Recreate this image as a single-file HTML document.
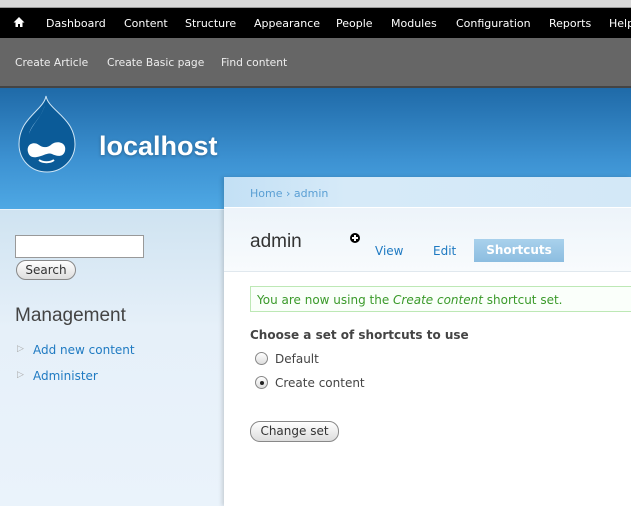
<!DOCTYPE html>
<html><head><meta charset="utf-8"><style>
*{margin:0;padding:0;box-sizing:border-box}
body{width:631px;height:506px;overflow:hidden;position:relative;font-family:"DejaVu Sans","Liberation Sans",sans-serif;background:#fff}
.a{position:absolute;white-space:nowrap}
#tabs{left:0;top:0;width:631px;height:8px;background:#d8d8d8;border-bottom:1px solid #999}
#tb{left:0;top:8px;width:631px;height:30px;background:#000;color:#fff;font-size:11px}
#tb span{position:absolute;top:9px}
#sc{left:0;top:38px;width:631px;height:50px;background:#666;color:#eee;font-size:10.7px;border-bottom:2px solid #444}
#sc span{position:absolute;top:18px}
#hd{left:0;top:88px;width:631px;height:121px;background:linear-gradient(#1f6aa8,#3d92d2 60%,#4ea8e4)}
#sb{left:0;top:209px;width:224px;height:297px;background:linear-gradient(#cfe3f1,#e6f0f9 40%,#eaf3fb);border-top:1px solid #e8f2fa}
#main{left:224px;top:177px;width:407px;height:329px;background:#fff;box-shadow:-2px 0 4px rgba(0,0,0,.15)}
#bc{left:224px;top:177px;width:407px;height:31px;background:linear-gradient(90deg,#c3e0f5,#d6eaf8 30%,#d3e8f7);border-bottom:1px solid #fff}
#ttl{left:224px;top:208px;width:407px;height:64px;background:linear-gradient(#edf4fa,#f8fbfd);border-bottom:1px solid #e0e8ee}
</style></head><body>
<div class="a" id="tabs"></div>
<div class="a" id="tb">
<svg style="position:absolute;left:13px;top:8px" width="12" height="12" viewBox="0 0 12 12"><path d="M6 1L0.5 6.5H2.5V11H5V8H7V11H9.5V6.5H11.5Z" fill="#fff"/></svg>
<span style="left:46px">Dashboard</span><span style="left:124px">Content</span><span style="left:185px">Structure</span><span style="left:254px">Appearance</span><span style="left:336px">People</span><span style="left:391px">Modules</span><span style="left:456px">Configuration</span><span style="left:549px">Reports</span><span style="left:609px">Help</span>
</div>
<div class="a" id="sc"><span style="left:15px">Create Article</span><span style="left:107px">Create Basic page</span><span style="left:221px">Find content</span></div>
<div class="a" id="hd">
<svg style="position:absolute;left:16px;top:6px" width="62" height="80" viewBox="0 0 62 80">
<path d="M30 2C32 16 59 24 59 50C59 66 46 78 31 78C15 78 3 66 3 50C3 24 28 16 30 2Z" fill="#0b5b98" stroke="#cfe6f6" stroke-width="1"/>
<path d="M13 40C16 30 27 22 29 10C26 24 15 30 13 40Z" fill="#9ccbec"/>
<path d="M12 58C10 50 18 47 23 51C27 54 32 54 36 50C42 46 51 49 49 57C47 64 40 62 36 60C32 58 27 62 21 63C16 64 13 62 12 58Z" fill="#fff"/>
<path d="M23 66C27 69 34 69 38 66" stroke="#fff" stroke-width="2" fill="none"/>
</svg>
<div class="a" style="left:99px;top:43px;color:#fff;font:bold 27px 'Liberation Sans',sans-serif;text-shadow:0 1px 3px rgba(0,0,0,.3)">localhost</div>
</div>
<div class="a" id="sb">
<div class="a" style="left:15px;top:25px;width:129px;height:23px;background:#fff;border:1px solid #999"></div>
<div class="a" style="left:16px;top:50px;width:60px;height:20px;border:1px solid #888;border-radius:10px;background:linear-gradient(#fff,#ddd);font-size:12px;text-align:center;line-height:18px;color:#333">Search</div>
<div class="a" style="left:15px;top:95px;font:19px 'Liberation Sans',sans-serif;color:#444">Management</div>
<div class="a" style="left:17px;top:134px;font-size:9px;color:#aaa">▷</div>
<div class="a" style="left:33px;top:133px;font-size:12px;color:#1f7ac2">Add new content</div>
<div class="a" style="left:17px;top:160px;font-size:9px;color:#aaa">▷</div>
<div class="a" style="left:33px;top:159px;font-size:12px;color:#1f7ac2">Administer</div>
</div>
<div class="a" id="main"></div>
<div class="a" id="bc"><span class="a" style="left:26px;top:10px;font-size:11px;color:#5a9fd4">Home › admin</span></div>
<div class="a" id="ttl">
<span class="a" style="left:26px;top:23px;font:19px 'Liberation Sans',sans-serif;color:#333">admin</span>
<div class="a" style="left:126px;top:25px;width:10px;height:10px;border-radius:50%;background:#000"><div class="a" style="left:2px;top:4px;width:6px;height:2px;background:#fff"></div><div class="a" style="left:4px;top:2px;width:2px;height:6px;background:#fff"></div></div>
<span class="a" style="left:151px;top:36px;font-size:12px;color:#1f7ac2">View</span>
<span class="a" style="left:209px;top:36px;font-size:12px;color:#1f7ac2">Edit</span>
<div class="a" style="left:250px;top:31px;width:90px;height:23px;background:linear-gradient(#a9d1ec,#8cbde0);color:#fff;font-weight:bold;font-size:12px;text-align:center;line-height:23px">Shortcuts</div>
</div>
<div class="a" style="left:250px;top:286px;width:390px;height:26px;border:1px solid #bde8b5;background:#fafffa;color:#3a9a2a;font-size:12px;padding:6px 6px">You are now using the <i>Create content</i> shortcut set.</div>
<div class="a" style="left:250px;top:328px;font-size:12px;font-weight:bold;color:#444">Choose a set of shortcuts to use</div>
<div class="a" style="left:255px;top:352px;width:13px;height:13px;border-radius:50%;border:1px solid #888;background:linear-gradient(#fff,#ddd)"></div>
<div class="a" style="left:275px;top:352px;font-size:12px;color:#444">Default</div>
<div class="a" style="left:255px;top:376px;width:13px;height:13px;border-radius:50%;border:1px solid #888;background:linear-gradient(#fff,#ddd)"><div class="a" style="left:3.5px;top:3.5px;width:4px;height:4px;border-radius:50%;background:#222"></div></div>
<div class="a" style="left:275px;top:376px;font-size:12px;color:#444">Create content</div>
<div class="a" style="left:250px;top:421px;width:89px;height:21px;border:1px solid #888;border-radius:10px;background:linear-gradient(#fff,#ddd);font-size:12px;text-align:center;line-height:19px;color:#333">Change set</div>
</body></html>
